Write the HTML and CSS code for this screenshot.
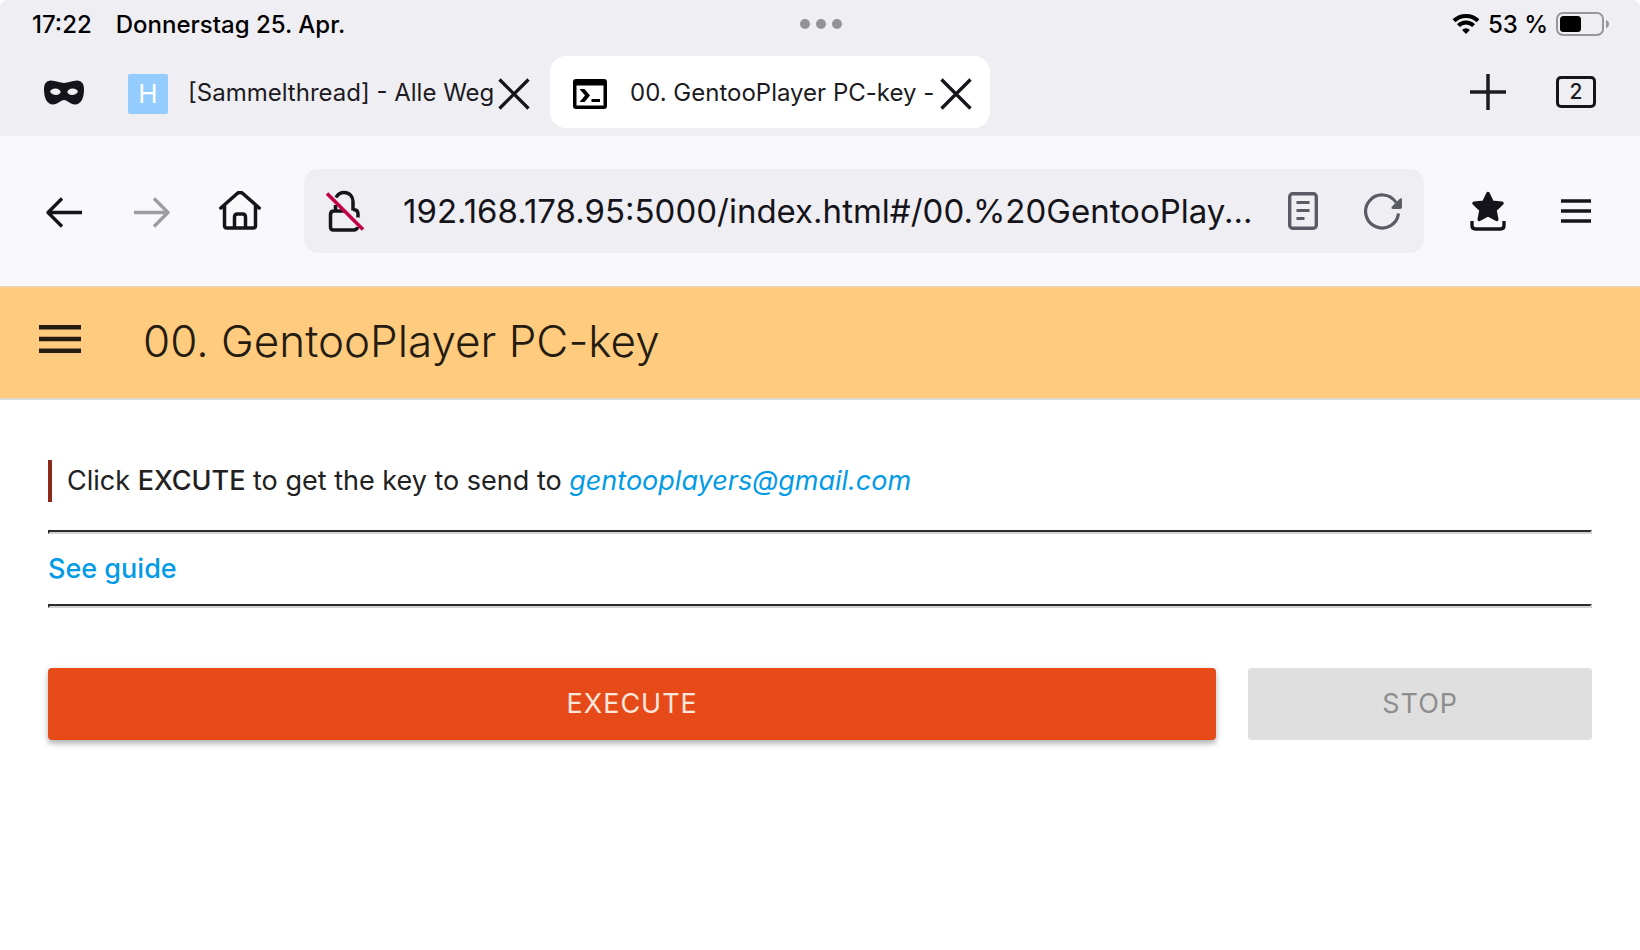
FILE: index.html
```html
<!DOCTYPE html>
<html lang="de">
<head>
<meta charset="utf-8">
<meta name="viewport" content="width=device-width, initial-scale=1">
<title>00. GentooPlayer PC-key</title>
<link rel="stylesheet" href="styles.css">
</head>
<body>
<div class="chrome">
  <div class="status">
    <div class="status-left"><span>17:22</span><span>Donnerstag 25. Apr.</span></div>
    <div class="dots"><i class="dot"></i><i class="dot"></i><i class="dot"></i></div>
    <div class="status-right">
      <svg width="28" height="22" viewBox="0 0 28 22" fill="none" stroke="#000" stroke-width="4"><path d="M2 7.8a17.2 17.2 0 0 1 24 0"/><path d="M6.4 12.6a10.8 10.8 0 0 1 15.200 0"/><path d="M14 21l-3.900-4.100a5.600 5.600 0 0 1 7.800 0z" fill="#000" stroke="none"/></svg>
      <span>53 %</span>
      <svg class="battery" width="54" height="24" viewBox="0 0 54 24"><rect x="1" y="1" width="46" height="22" rx="6" fill="none" stroke="#97969b" stroke-width="2"/><rect x="4" y="4" width="21" height="16" rx="3.500"/><path d="M50 8q3 1 3 4t-3 4z" fill="#97969b"/></svg>
    </div>
  </div>
  <div class="tabs">
    <button class="mask" aria-label="Privater Modus"><svg width="40" height="25" viewBox="0 0 40 25"><path fill="#15141a" fill-rule="evenodd" d="M7 .5c5 0 8.500 2.500 13 2.500S28 .5 33 .5c5 0 7 3.500 7 9C40 18 37 24.500 31 24.500c-5 0-7.500-4.500-11-4.500s-6 4.500-11 4.500C3 24.500 0 18 0 9.500 0 4 2 .5 7 .5zM11.500 8.500c-3 0-5 1.500-5.500 3 1 2 3 3.500 6 3.500 2.800 0 4.200-1.500 4.800-3-.8-2.200-2.600-3.500-5.300-3.500zm17 0c-2.700 0-4.500 1.300-5.300 3.500.6 1.500 2 3 4.800 3 3 0 5-1.500 6-3.500-.5-1.500-2.500-3-5.500-3z"/></svg></button>
    <div class="tab">
      <span class="favicon">H</span>
      <button class="tab-title">[Sammelthread] - Alle Weg</button>
      <button class="close" aria-label="Tab schließen"><svg width="32" height="32" viewBox="0 0 32 32"><path d="M1.500 1.500l29 29M30.500 1.500l-29 29" stroke="#15141a" stroke-width="3.300"/></svg></button>
    </div>
    <div class="tab tab-active">
      <svg class="terminal" width="34" height="30" viewBox="0 0 34 30"><path fill-rule="evenodd" d="M3 0h28a3 3 0 0 1 3 3v24a3 3 0 0 1-3 3H3a3 3 0 0 1-3-3V3a3 3 0 0 1 3-3zm.5 6.500V26.500h27v-20zM6.500 10h5l5.500 6.500-5.500 6.500h-5l5.500-6.500zM18.500 20h8.500v3h-8.500z"/></svg>
      <button class="tab-title">00. GentooPlayer PC-key -</button>
      <button class="close" aria-label="Tab schließen"><svg width="32" height="32" viewBox="0 0 32 32"><path d="M1.500 1.500l29 29M30.500 1.500l-29 29" stroke="#15141a" stroke-width="3.300"/></svg></button>
    </div>
    <div class="tab-tools">
      <button aria-label="Neuer Tab"><svg width="36" height="36" viewBox="0 0 36 36"><path d="M18 0v36M0 18h36" stroke="#1c1b22" stroke-width="3.500"/></svg></button>
      <button class="count">2</button>
    </div>
  </div>
</div>
<div class="toolbar">
  <button aria-label="Zurück"><svg width="40" height="40" viewBox="0 0 40 40"><path d="M38 21.500H4M18 7.500L4 21.500l14 14" fill="none" stroke="#15141a" stroke-width="3.400" stroke-linejoin="round"/></svg></button>
  <button aria-label="Vor" disabled><svg width="40" height="40" viewBox="0 0 40 40"><path d="M2 21.500h34M22 7.500l14 14-14 14" fill="none" stroke="#9d9da0" stroke-width="3.400" stroke-linejoin="round"/></svg></button>
  <button class="home" aria-label="Startseite"><svg width="42" height="40" viewBox="0 0 42 40" fill="none" stroke="#15141a" stroke-width="3.500" stroke-linejoin="round" stroke-linecap="round"><path d="M1.800 17L18.500 2.200q2.500-1.500 5 0L40.200 17M5.500 15v19.500q0 2.500 2.500 2.500h26q2.500 0 2.500-2.500V15"/><path d="M15.500 36.500V26q0-3 3-3h5q3 0 3 3V36.500"/></svg></button>
  <div class="urlbar">
    <button aria-label="Verbindung nicht sicher"><svg width="40" height="42" viewBox="0 0 40 42" fill="none"><path d="M11 7.500C13 4 15.500 2.500 19 2.500c5.500 0 9 4 9 9v9M10.500 15v5.500M28 19.500q5 0 5 4.500v3.500M20 21H9q-3.500 0-3.500 3.500v12.500q0 3 3 3h20q3.500 0 4-3" stroke="#15141a" stroke-width="3.500"/><path d="M2 3.500L38 39.500" stroke="#c50042" stroke-width="3.500"/></svg></button>
    <input class="url" type="text" aria-label="Adresse" value="192.168.178.95:5000/index.html#/00.%20GentooPlay...">
    <button class="reader" aria-label="Leseansicht"><svg width="30" height="38" viewBox="0 0 30 38"><rect x="1.700" y="1.700" width="26.600" height="34.600" rx="3" fill="none" stroke="#5b5b66" stroke-width="3.400"/><path d="M8.500 10.500h13M8.500 18.500h13M8.500 26.500h8" stroke="#5b5b66" stroke-width="3.200"/></svg></button>
    <button aria-label="Neu laden"><svg width="38" height="38" viewBox="0 0 38 38"><path d="M34.500 21.500A16.500 16.500 0 1 1 32 10.500" fill="none" stroke="#5b5b66" stroke-width="3.200"/><path d="M38 7v8q0 2-2 2h-7q-2.500-.5-1-2.500L35.500 7q2-1.500 2.500 0z" fill="#5b5b66"/></svg></button>
  </div>
  <button aria-label="Lesezeichen"><svg width="36" height="40" viewBox="0 0 36 40"><path d="M18 2.500l4.200 8.700 9.800 1.100-7 6.700 1.800 9.500L18 23.800l-8.800 4.700L11 19l-7-6.700 9.800-1.100z" fill="#15141a" stroke="#15141a" stroke-width="3.500" stroke-linejoin="round"/><path d="M2 30v4.500Q2 38 5.500 38h25q3.500 0 3.500-3.500V30" fill="none" stroke="#15141a" stroke-width="3.400"/></svg></button>
  <button class="menu" aria-label="Menü"><svg width="32" height="26" viewBox="0 0 32 26"><path d="M1 3h30M1 13h30M1 23h30" stroke="#15141a" stroke-width="3.500"/></svg></button>
</div>
<header class="appbar">
  <button aria-label="Navigation"><svg width="42" height="28" viewBox="0 0 42 28"><path d="M0 2.300h42M0 14h42M0 25.700h42" stroke="#241b11" stroke-width="4.600"/></svg></button>
  <h1>00. GentooPlayer PC-key</h1>
</header>
<main class="content">
  <blockquote>Click <strong>EXCUTE</strong> to get the key to send to <a class="mail" href="mailto:gentooplayers@gmail.com">gentooplayers@gmail.com</a></blockquote>
  <hr>
  <p><a class="guide" href="#guide">See guide</a></p>
  <hr>
  <div class="actions">
    <button class="execute">EXECUTE</button>
    <button class="stop" disabled>STOP</button>
  </div>
</main>
</body>
</html>
```
FILE: styles.css
```css
* { box-sizing: border-box; }
body { margin: 0; background: #fff; color: #212121; font-family: Inter, "Liberation Sans", sans-serif; }
button { margin: 0; padding: 0; border: 0; background: none; color: inherit; font: inherit; }
svg { display: block; }

.chrome { background: #efeef3; border-radius: 8px 8px 0 0; }
.status { display: grid; grid-template-columns: 1fr auto 1fr; align-items: center; height: 48px; padding: 0 30px 0 32px; color: #000; font-size: 24px; font-weight: 500; }
.status-left { display: flex; gap: 24px; }
.dots { display: flex; gap: 6px; }
.dot { width: 10px; height: 10px; border-radius: 50%; background: #939297; }
.status-right { display: flex; justify-content: flex-end; align-items: center; gap: 8px; }

.tabs { display: flex; align-items: center; height: 88px; padding: 0 44px; color: #1c1b22; font-size: 24px; }
.mask { margin-right: 24px; }
.tab { display: flex; align-items: center; width: 440px; height: 72px; padding: 0 18px 0 20px; border-radius: 16px; }
.tab-active { margin-left: 2px; padding-left: 23px; background: #fff; }
.tab .close { margin: 4px 0 0 auto; }
.tab-title { white-space: nowrap; }
.favicon { display: flex; justify-content: center; align-items: center; width: 40px; height: 40px; margin: 3px 20px 0 0; border-radius: 2px; background: #94ccff; color: #fff; font-size: 26px; }
.terminal { margin: 4px 23px 0 0; }
.tab-tools { display: flex; align-items: center; gap: 50px; margin-left: auto; }
.count { width: 40px; height: 32px; border: 3px solid #15141a; border-radius: 5px; font-size: 21px; font-weight: 500; line-height: 26px; }

.toolbar { display: flex; align-items: center; height: 151px; padding: 0 48px 0 44px; border-bottom: 1px solid #e0d5cf; background: #f9f9fc; }
.toolbar > button + button { margin-left: 48px; }
.toolbar > .home { margin-left: 47px; }
.urlbar { display: flex; flex: 1; align-items: center; height: 84px; margin: 0 46px 0 43px; padding: 0 22px 0 21px; border-radius: 14px; background: #efeef3; }
.url { flex: 1; min-width: 0; margin: 0 36px 0 38px; padding: 0; border: 0; outline: 0; background: none; color: #15141a; font-family: inherit; font-size: 33px; }
.reader { margin-right: 46px; }
.toolbar > .menu { margin-left: 54px; }

.appbar { display: flex; align-items: center; gap: 62px; height: 113px; padding: 0 39px 8px; border-bottom: 2px solid #dcdcd4; background: #ffcb7f; color: #241b11; }
.appbar h1 { margin: 0; padding-top: 4px; font-size: 44px; font-weight: 300; line-height: 60px; }

.content { padding: 60px 48px; font-size: 27px; line-height: 42px; }
blockquote { margin: 0 0 28px; padding-left: 15px; border-left: 4px solid #8b2a1b; }
strong { font-weight: 500; }
a { color: #039be5; text-decoration: none; }
.mail { font-style: italic; }
.guide { font-weight: 500; }
hr { height: 4px; margin: 0; border: 2px solid; border-color: #2c2c2c #d2d2d2 #d2d2d2 #2c2c2c; }
p { margin: 14px 0; }
.actions { display: grid; grid-template-columns: 17fr 5fr; gap: 32px; margin-top: 60px; }
.actions button { height: 72px; border-radius: 4px; letter-spacing: 1px; }
.execute { background: #e64a19; color: #ffe6dc; box-shadow: 0 4px 5px rgba(0, 0, 0, .2), 0 2px 8px rgba(0, 0, 0, .14); }
.stop { background: #dfdfdf; color: #8e8e8e; }
```
